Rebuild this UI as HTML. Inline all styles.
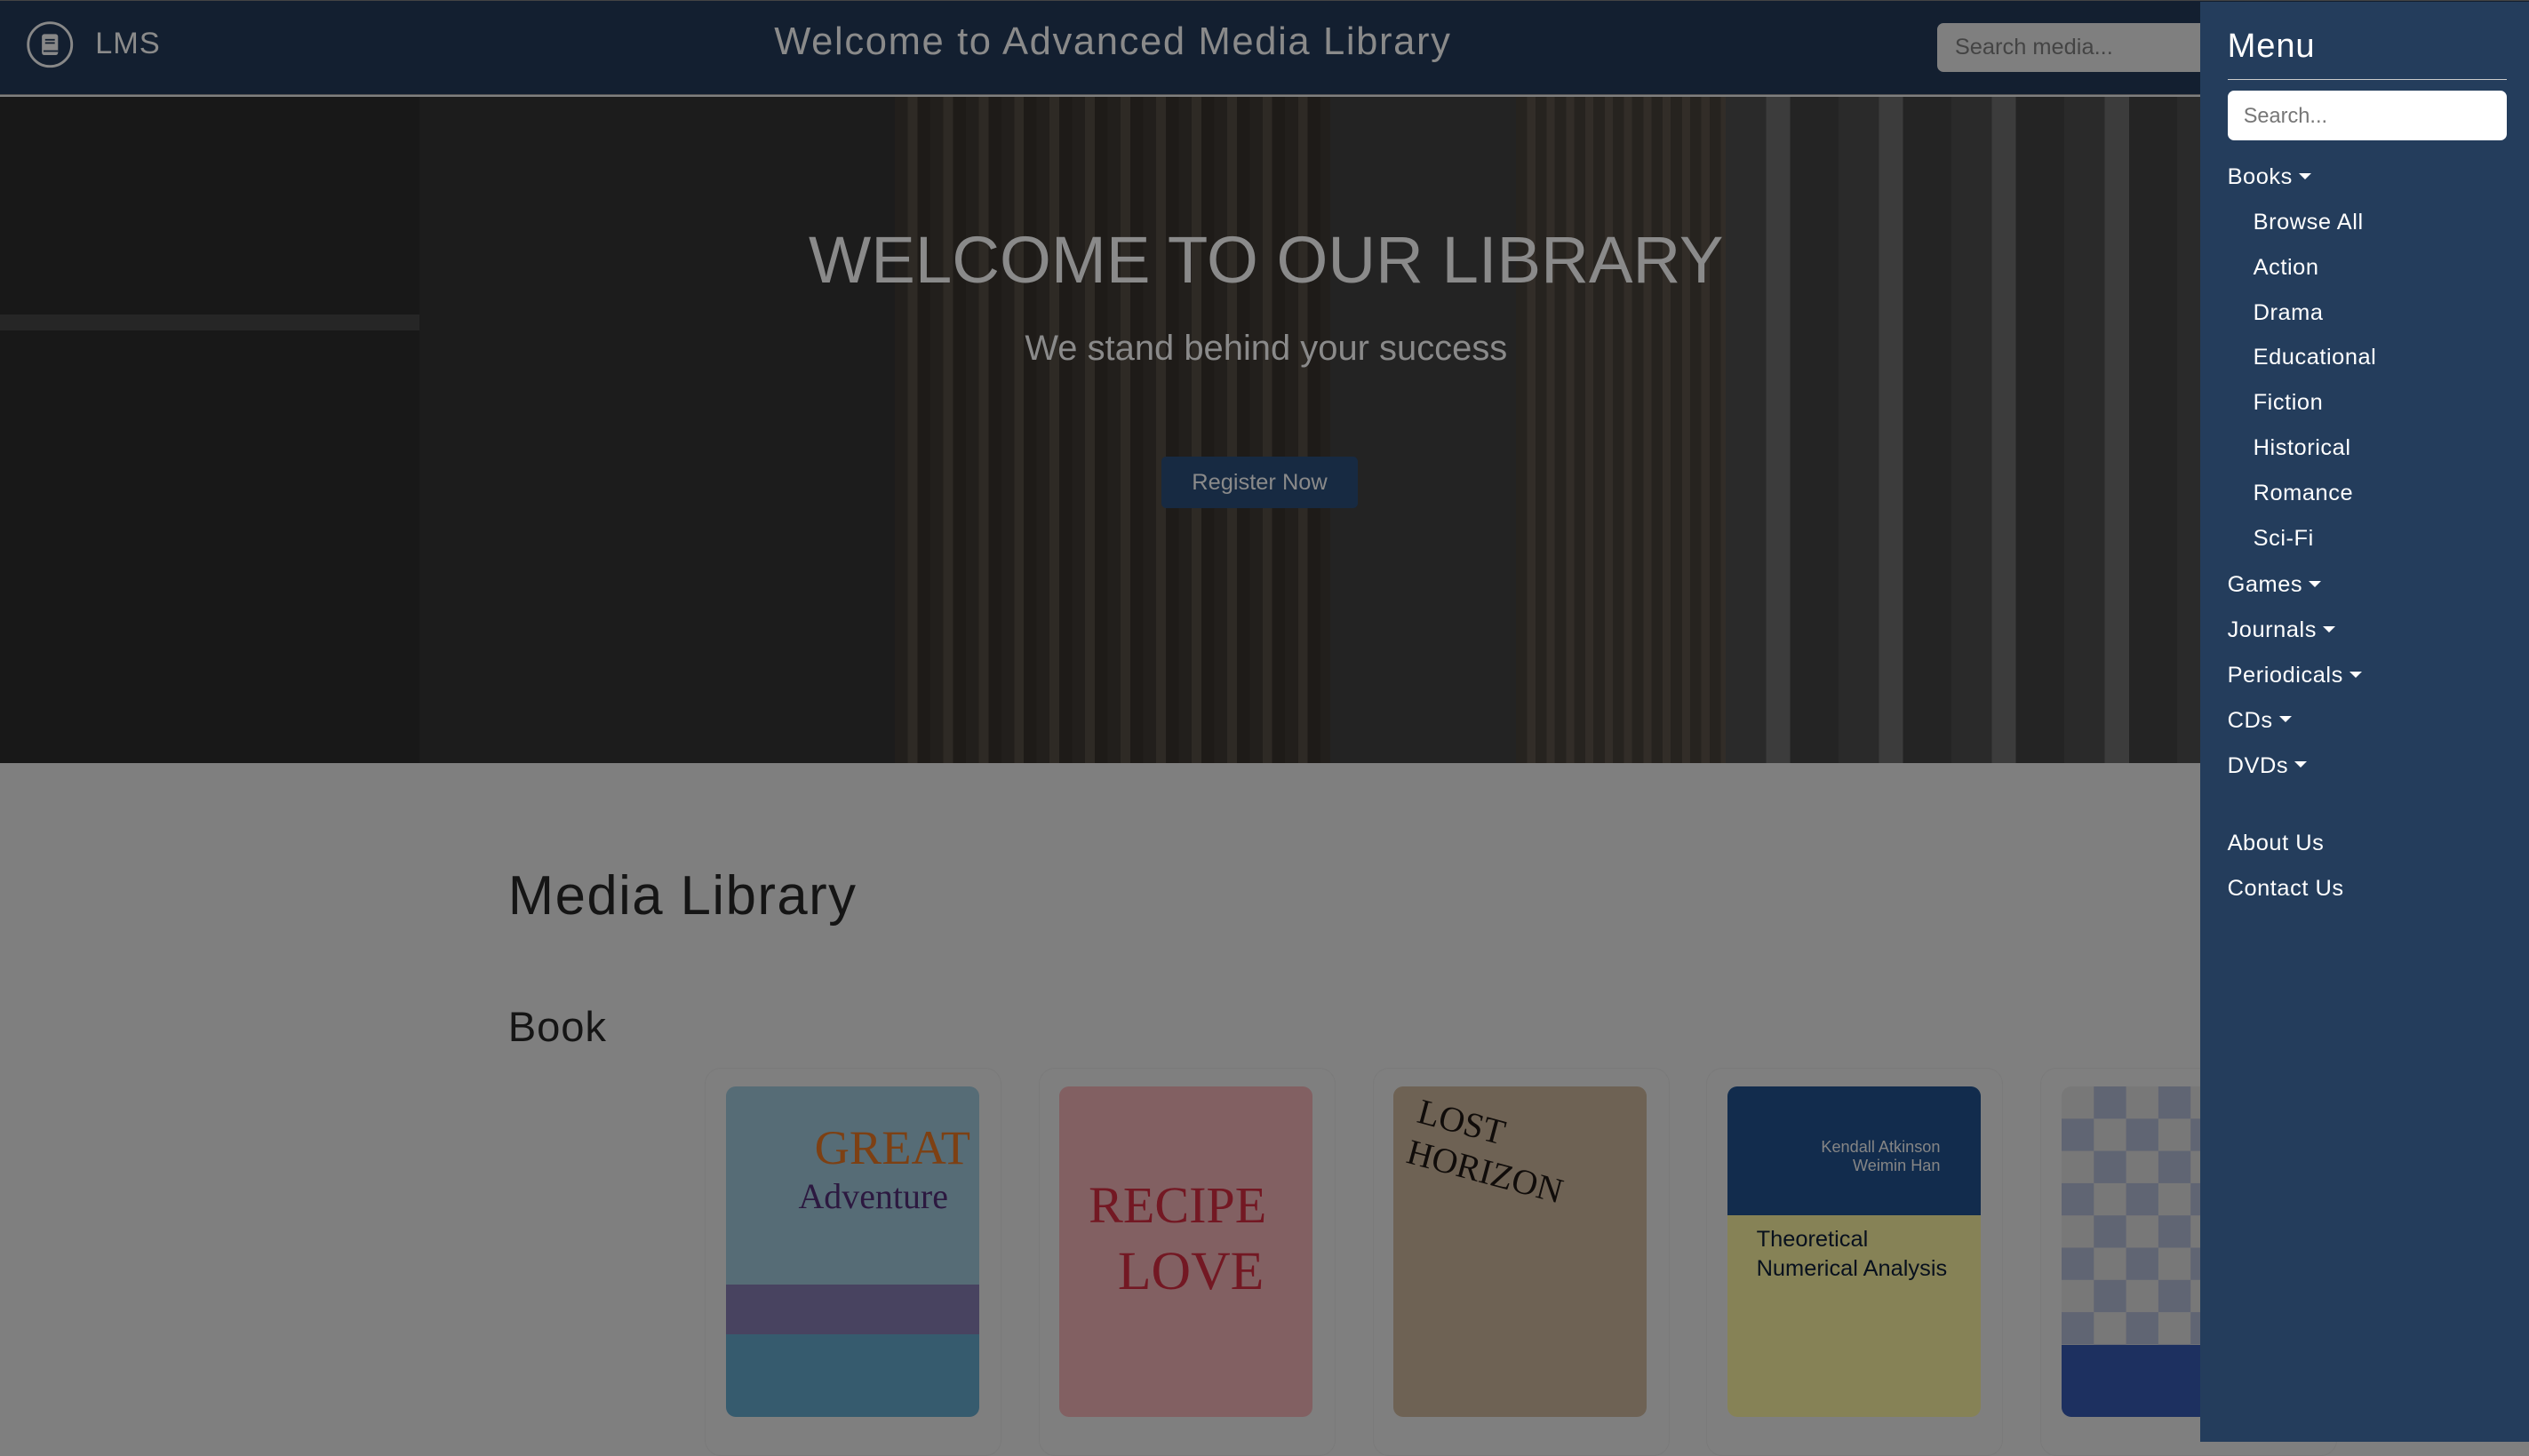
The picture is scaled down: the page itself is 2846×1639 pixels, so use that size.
<!DOCTYPE html>
<html><head><meta charset="utf-8"><style>
html{zoom:1.81505}
body{margin:0;width:1568px;height:894px;overflow:hidden;position:relative;background:#7f7f7f;font-family:"Liberation Sans",sans-serif}
.nav{position:absolute;left:0;top:0;width:1568px;height:59px;background:#131f30;border-top:1px solid #444;border-bottom:1px solid #555;box-sizing:border-box}
.hero{position:absolute;left:0;top:60px;width:1364px;height:413px;background:#141414;overflow:hidden}
.sb{position:absolute;left:1364px;top:1px;width:204px;height:893px;background:#243d5c;color:#fff}
.sb a{position:absolute;font-size:14px;color:#fff;letter-spacing:0.3px}
.car:after{content:"";display:inline-block;border:4px solid transparent;border-top:4px solid #fff;border-bottom:0;margin-left:4px;vertical-align:3px}
.card{position:absolute;top:662px;width:183px;height:240px;border:1px solid #7a7a7a;border-radius:10px;background:#7f7f7f}
.cov{position:absolute;top:674px;width:157px;height:205px;border-radius:6px;overflow:hidden;filter:brightness(0.6)}
</style></head><body>
<div class="nav">
<svg style="position:absolute;left:16px;top:12px" width="30" height="30" viewBox="0 0 30 30"><circle cx="15" cy="15" r="13.5" fill="none" stroke="#888" stroke-width="1.6"/><rect x="10" y="8.5" width="10" height="13" rx="1.5" fill="#888"/><line x1="12" y1="12" x2="18" y2="12" stroke="#131f30"/><line x1="12" y1="14" x2="18" y2="14" stroke="#131f30"/><line x1="11" y1="19" x2="20" y2="19" stroke="#131f30"/></svg>
<div style="position:absolute;left:59px;top:16px;font-size:19px;color:#8a8a8a;letter-spacing:0.5px">LMS</div>
<div style="position:absolute;left:480px;top:12px;font-size:24px;color:#8a8a8a;letter-spacing:0.9px">Welcome to Advanced Media Library</div>
<div style="position:absolute;left:1201px;top:14px;width:170px;height:30px;background:#7f7f7f;border-radius:4px;color:#444;font-size:14px;line-height:30px;padding-left:11px;box-sizing:border-box">Search media...</div>
</div>
<div class="hero">
<div style="position:absolute;left:0;top:0;width:260px;height:413px;background:#181818"></div>
<div style="position:absolute;left:0;top:135px;width:260px;height:10px;background:#262626"></div>
<div style="position:absolute;left:260px;top:0;width:295px;height:413px;background:#1c1c1c"></div>
<div style="position:absolute;left:555px;top:0;width:270px;height:413px;background:repeating-linear-gradient(90deg,#221f1c 0 8px,#2e2a25 8px 14px,#1e1b18 14px 22px)"></div>
<div style="position:absolute;left:825px;top:0;width:115px;height:413px;background:#232323"></div>
<div style="position:absolute;left:940px;top:0;width:130px;height:413px;background:repeating-linear-gradient(90deg,#26231f 0 7px,#322d28 7px 12px)"></div>
<div style="position:absolute;left:1070px;top:0;width:294px;height:413px;background:repeating-linear-gradient(90deg,#2a2a2a 0 25px,#3c3c3c 25px 40px,#242424 40px 70px)"></div>
<div style="position:absolute;left:0;top:78px;width:1570px;text-align:center;font-size:41px;color:#8a8a8a">WELCOME TO OUR LIBRARY</div>
<div style="position:absolute;left:0;top:144px;width:1570px;text-align:center;font-size:22px;color:#8a8a8a">We stand behind your success</div>
<div style="position:absolute;left:720px;top:223px;width:122px;height:32px;background:#172a42;border-radius:3px;color:#8a8a8a;font-size:14px;line-height:32px;text-align:center">Register Now</div>
</div>
<div style="position:absolute;left:315px;top:536px;font-size:34px;color:#151515;letter-spacing:0.8px">Media Library</div>
<div style="position:absolute;left:315px;top:622px;font-size:26px;color:#151515;letter-spacing:0.5px">Book</div>
<div class="card" style="left:437px"></div><div class="card" style="left:644px"></div><div class="card" style="left:851px"></div><div class="card" style="left:1058px"></div><div class="card" style="left:1265px"></div>
<div class="cov" style="left:450px;background:linear-gradient(#8fb4c4 0 60%,#7870a0 60% 75%,#5a98b8 75%)"><div style="position:absolute;left:55px;top:20px;font-size:30px;color:#d06a20;font-family:'Liberation Serif'">GREAT</div><div style="position:absolute;left:45px;top:55px;font-size:22px;color:#4a2a6a;font-family:'Liberation Serif'">Adventure</div></div>
<div class="cov" style="left:657px;background:#d8a0a4"><div style="position:absolute;left:18px;top:55px;font-size:32px;color:#c0283a;font-family:'Liberation Serif'">RECIPE</div><div style="position:absolute;left:36px;top:95px;font-size:34px;color:#c0283a;font-family:'Liberation Serif'">LOVE</div></div>
<div class="cov" style="left:864px;background:#b8a48c"><div style="position:absolute;left:10px;top:20px;font-size:22px;color:#1a1410;font-family:'Liberation Serif';transform:rotate(15deg)">LOST HORIZON</div></div>
<div class="cov" style="left:1071px;background:linear-gradient(#1e4a80 0 39%,#e0d890 39%)"><div style="position:absolute;right:25px;top:32px;font-size:10px;color:#ddd;text-align:right">Kendall Atkinson<br>Weimin Han</div><div style="position:absolute;left:18px;top:86px;font-size:14px;color:#0c1a30;line-height:18px">Theoretical<br>Numerical Analysis</div></div>
<div class="cov" style="left:1278px;width:86px;border-radius:6px 0 0 6px;background:repeating-conic-gradient(#a0a8c0 0 25%,#c8c8c8 0 50%) 0 0/40px 40px"><div style="position:absolute;left:0;top:160px;width:86px;height:45px;background:#3050a0"></div></div>
<div class="sb">
<div style="position:absolute;left:17px;top:16px;font-size:21px;letter-spacing:0.5px">Menu</div>
<div style="position:absolute;left:17px;top:48px;width:173px;border-top:1px solid #ccc"></div>
<div style="position:absolute;left:17px;top:55px;width:173px;height:31px;background:#fff;border-radius:4px;color:#777;font-size:13px;line-height:31px;padding-left:10px;box-sizing:border-box">Search...</div>
<a class="car" style="left:17px;top:101px">Books</a>
<a style="left:33px;top:129px">Browse All</a><a style="left:33px;top:157px">Action</a><a style="left:33px;top:185px">Drama</a><a style="left:33px;top:213px">Educational</a><a style="left:33px;top:241px">Fiction</a><a style="left:33px;top:269px">Historical</a><a style="left:33px;top:297px">Romance</a><a style="left:33px;top:325px">Sci-Fi</a>
<a class="car" style="left:17px;top:354px">Games</a><a class="car" style="left:17px;top:382px">Journals</a><a class="car" style="left:17px;top:410px">Periodicals</a><a class="car" style="left:17px;top:438px">CDs</a><a class="car" style="left:17px;top:466px">DVDs</a>
<a style="left:17px;top:514px">About Us</a><a style="left:17px;top:542px">Contact Us</a>
</div>
</body></html>
